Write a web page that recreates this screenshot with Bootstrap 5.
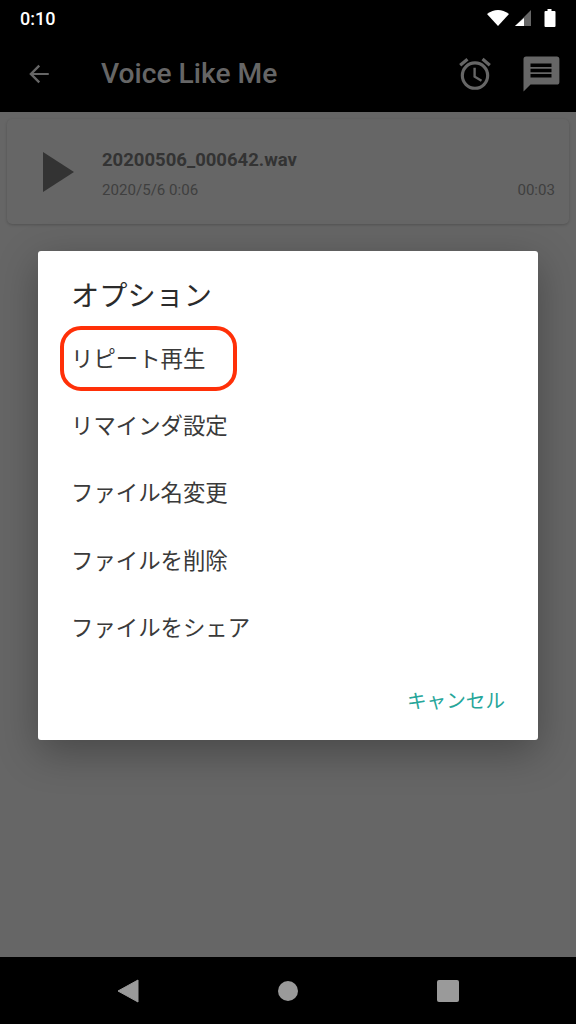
<!DOCTYPE html>
<html lang="ja">
<head>
<meta charset="utf-8">
<title>Voice Like Me</title>
<link rel="stylesheet" href="https://cdn.jsdelivr.net/npm/bootstrap@5.3.0/dist/css/bootstrap.min.css">
<style>
html,body{height:100%;margin:0}
body{font-family:Roboto,"Noto Sans CJK JP",sans-serif;background:#666}
.phone{height:1024px;width:576px;position:relative;overflow:hidden}
.sysbar{height:36px;padding:0 20px;color:#fff;font-size:18px;font-weight:500}
.toolbar{height:76px;padding:0 16px 0 26px}
.toolbar h1{font-size:28.2px;font-weight:500;color:#666;margin:0 0 0 49px;flex:1 1 auto}
.tool-chat{margin-left:26px;margin-right:-2px}
.content{background:#666;padding:7px 7px 0}
.rec{height:105px;background:#666;border:0;border-radius:5px;box-shadow:0 1px 3px rgba(0,0,0,.2);padding:0 14px 0 36px}
.rec-title{font-size:18.5px;font-weight:700;color:#333;line-height:20px;margin-top:2px;margin-bottom:11px}
.rec-meta{font-size:15.1px;color:#3f3f3f;line-height:18px}
.navbar-sys{height:67px;background:#000;gap:139px}
.scrim{position:absolute;left:38px;top:251px;width:500px;height:489px;background:#fff;border:0;border-radius:3px;box-shadow:0 12px 40px rgba(0,0,0,.3);padding:0}
.dlg-title{font-size:28.2px;color:#2b2b2b;line-height:40px;margin:26px 0 0 33px;font-weight:400}
.dlg-list{margin-top:9px}
.dlg-list .list-group-item{border:0;padding:0 0 0 33px;height:67.2px;line-height:67px;font-size:22.4px;color:#3a3a3a;background:transparent}
.dlg-cancel{font-size:19.6px;color:#26a69a;position:absolute;right:33px;bottom:24px;line-height:28px}
.ring{position:absolute;left:60px;top:326px;width:177px;height:65px;border:4px solid #ff3008;border-radius:21px}
</style>
</head>
<body>
<div class="phone d-flex flex-column">
  <div class="bg-black">
    <div class="sysbar d-flex align-items-center justify-content-between">
      <span>0:10</span>
      <span class="d-flex align-items-center gap-1">
        <svg width="24" height="18" viewBox="0 0 24 18"><path d="M0 5Q11-3 22 5L11 17Z" fill="#fff"/></svg>
        <svg width="17" height="18" viewBox="0 0 17 18"><path d="M16 1V17H0Z" fill="#666"/><path d="M9 9V17H0Z" fill="#fff"/></svg>
        <svg width="12" height="18" viewBox="0 0 12 18" class="ms-2"><path d="M3.500 0h4v2h3a1 1 0 0 1 1 1v14a1 1 0 0 1-1 1h-9a1 1 0 0 1-1-1V3a1 1 0 0 1 1-1h2Z" fill="#fff"/></svg>
      </span>
    </div>
    <div class="toolbar d-flex align-items-center">
      <svg width="26" height="26" viewBox="0 0 24 24"><path d="M21 11H7l6-6-1.500-1.500L3 12l8.500 8.500L13 19l-6-6h14Z" fill="#666"/></svg>
      <h1>Voice Like Me</h1>
      <svg width="38" height="38" viewBox="0 0 24 24"><path d="M22 5.700l-4.600-3.900-1.300 1.500 4.600 3.900ZM7.900 3.400 6.600 1.900 2 5.700l1.300 1.500ZM12.500 8H11v6l4.700 2.900.8-1.200-4-2.400ZM12 4a9 9 0 1 0 0 18 9 9 0 0 0 0-18Zm0 16a7 7 0 1 1 0-14 7 7 0 0 1 0 14Z" fill="#666"/></svg>
      <svg width="42" height="42" viewBox="0 0 24 24" class="tool-chat"><path d="M21 2H3.500A1.500 1.500 0 0 0 2 3.500V22l4-4h15a1.500 1.500 0 0 0 1.500-1.500v-13A1.500 1.500 0 0 0 21 2ZM18 14H6v-2h12Zm0-3H6V9h12Zm0-3H6V6h12Z" fill="#666"/></svg>
    </div>
  </div>
  <div class="content flex-grow-1">
    <div class="card rec flex-row align-items-center">
      <svg width="31" height="40" viewBox="0 0 31 40"><path d="M0 0 31 20 0 40Z" fill="#333"/></svg>
      <div class="flex-grow-1 ms-4 ps-1 pt-1">
        <div class="rec-title">20200506_000642.wav</div>
        <div class="rec-meta d-flex justify-content-between"><span>2020/5/6 0:06</span><span>00:03</span></div>
      </div>
    </div>
  </div>
  <div class="navbar-sys d-flex align-items-center justify-content-center">
    <svg width="22" height="24" viewBox="0 0 22 24"><path d="M21 1V23L1 12Z" fill="#9a9a9a" stroke="#9a9a9a" stroke-linejoin="round"/></svg>
    <svg width="20" height="20" viewBox="0 0 20 20"><circle cx="10" cy="10" r="10" fill="#9a9a9a"/></svg>
    <svg width="22" height="22" viewBox="0 0 22 22"><rect width="22" height="22" rx="2" fill="#9a9a9a"/></svg>
  </div>
  <div class="card scrim">
    <div class="dlg-title">オプション</div>
    <div class="list-group list-group-flush dlg-list">
      <div class="list-group-item">リピート再生</div>
      <div class="list-group-item">リマインダ設定</div>
      <div class="list-group-item">ファイル名変更</div>
      <div class="list-group-item">ファイルを削除</div>
      <div class="list-group-item">ファイルをシェア</div>
    </div>
    <div class="dlg-cancel">キャンセル</div>
  </div>
  <div class="ring"></div>
</div>
<script src="https://cdn.jsdelivr.net/npm/bootstrap@5.3.0/dist/js/bootstrap.bundle.min.js"></script>
</body>
</html>
